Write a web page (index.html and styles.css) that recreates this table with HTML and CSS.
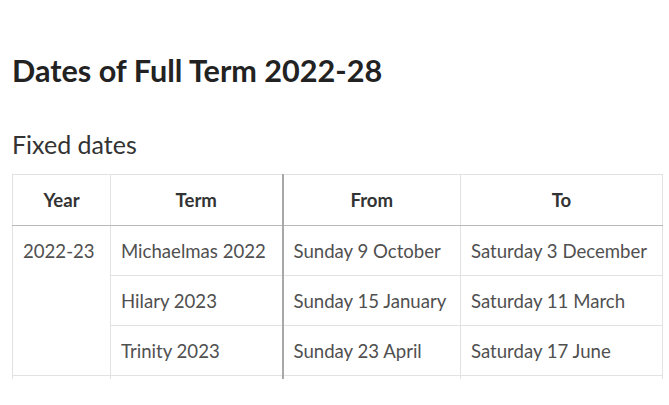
FILE: index.html
```html
<!DOCTYPE html>
<html lang="en">
<head>
<meta charset="utf-8">
<title>Dates of Full Term 2022-28</title>
<link rel="stylesheet" href="styles.css">
</head>
<body>
<main class="page">
  <h2 class="title">Dates of Full Term 2022-28</h2>
  <h3 class="subtitle">Fixed dates</h3>
  <div class="table-clip">
    <table class="terms">
      <colgroup>
        <col class="c-year"><col class="c-term"><col class="c-from"><col class="c-to">
      </colgroup>
      <thead>
        <tr><th>Year</th><th>Term</th><th class="from">From</th><th>To</th></tr>
      </thead>
      <tbody>
        <tr><td rowspan="3">2022-23</td><td>Michaelmas 2022</td><td class="from">Sunday 9 October</td><td>Saturday 3 December</td></tr>
        <tr><td>Hilary 2023</td><td class="from">Sunday 15 January</td><td>Saturday 11 March</td></tr>
        <tr><td>Trinity 2023</td><td class="from">Sunday 23 April</td><td>Saturday 17 June</td></tr>
        <tr class="next"><td></td><td></td><td class="from"></td><td></td></tr>
      </tbody>
    </table>
  </div>
</main>
</body>
</html>
```

FILE: styles.css
```css
html, body {
  margin: 0;
  padding: 0;
  background: #ffffff;
}
body {
  font-family: "Lato", "Open Sans", sans-serif;
  color: #444;
}
.page {
  padding: 0 6px 0 12px;
}
.title {
  margin: 0;
  padding-top: 52px;
  font-size: 30.6px;
  line-height: 38px;
  font-weight: 700;
  color: #222;
}
.subtitle {
  margin: 0;
  padding-top: 39px;
  font-size: 25px;
  line-height: 30px;
  font-weight: 400;
  color: #333;
}
.table-clip {
  margin-top: 15px;
  height: 205px;
  overflow: hidden;
  width: 652px;
}
.terms {
  border-collapse: collapse;
  width: 650px;
  table-layout: fixed;
  font-size: 18.6px;
}
.c-year { width: 98px; }
.c-term { width: 172px; }
.c-from { width: 178px; }
.c-to { width: 202px; }
.terms th, .terms td {
  border: 1px solid #e2e2e2;
  height: 49px;
  padding: 0 10px;
  white-space: nowrap;
}
.terms th {
  font-weight: 700;
  color: #333;
  text-align: center;
  border-bottom: 1px solid #b8b8b8;
  height: 50px;
}
.terms td {
  color: #505050;
  vertical-align: middle;
}
.terms td[rowspan] {
  vertical-align: top;
  padding-top: 14px;
}
.terms .from {
  border-left: 2px solid #a8a8a8;
}
```
